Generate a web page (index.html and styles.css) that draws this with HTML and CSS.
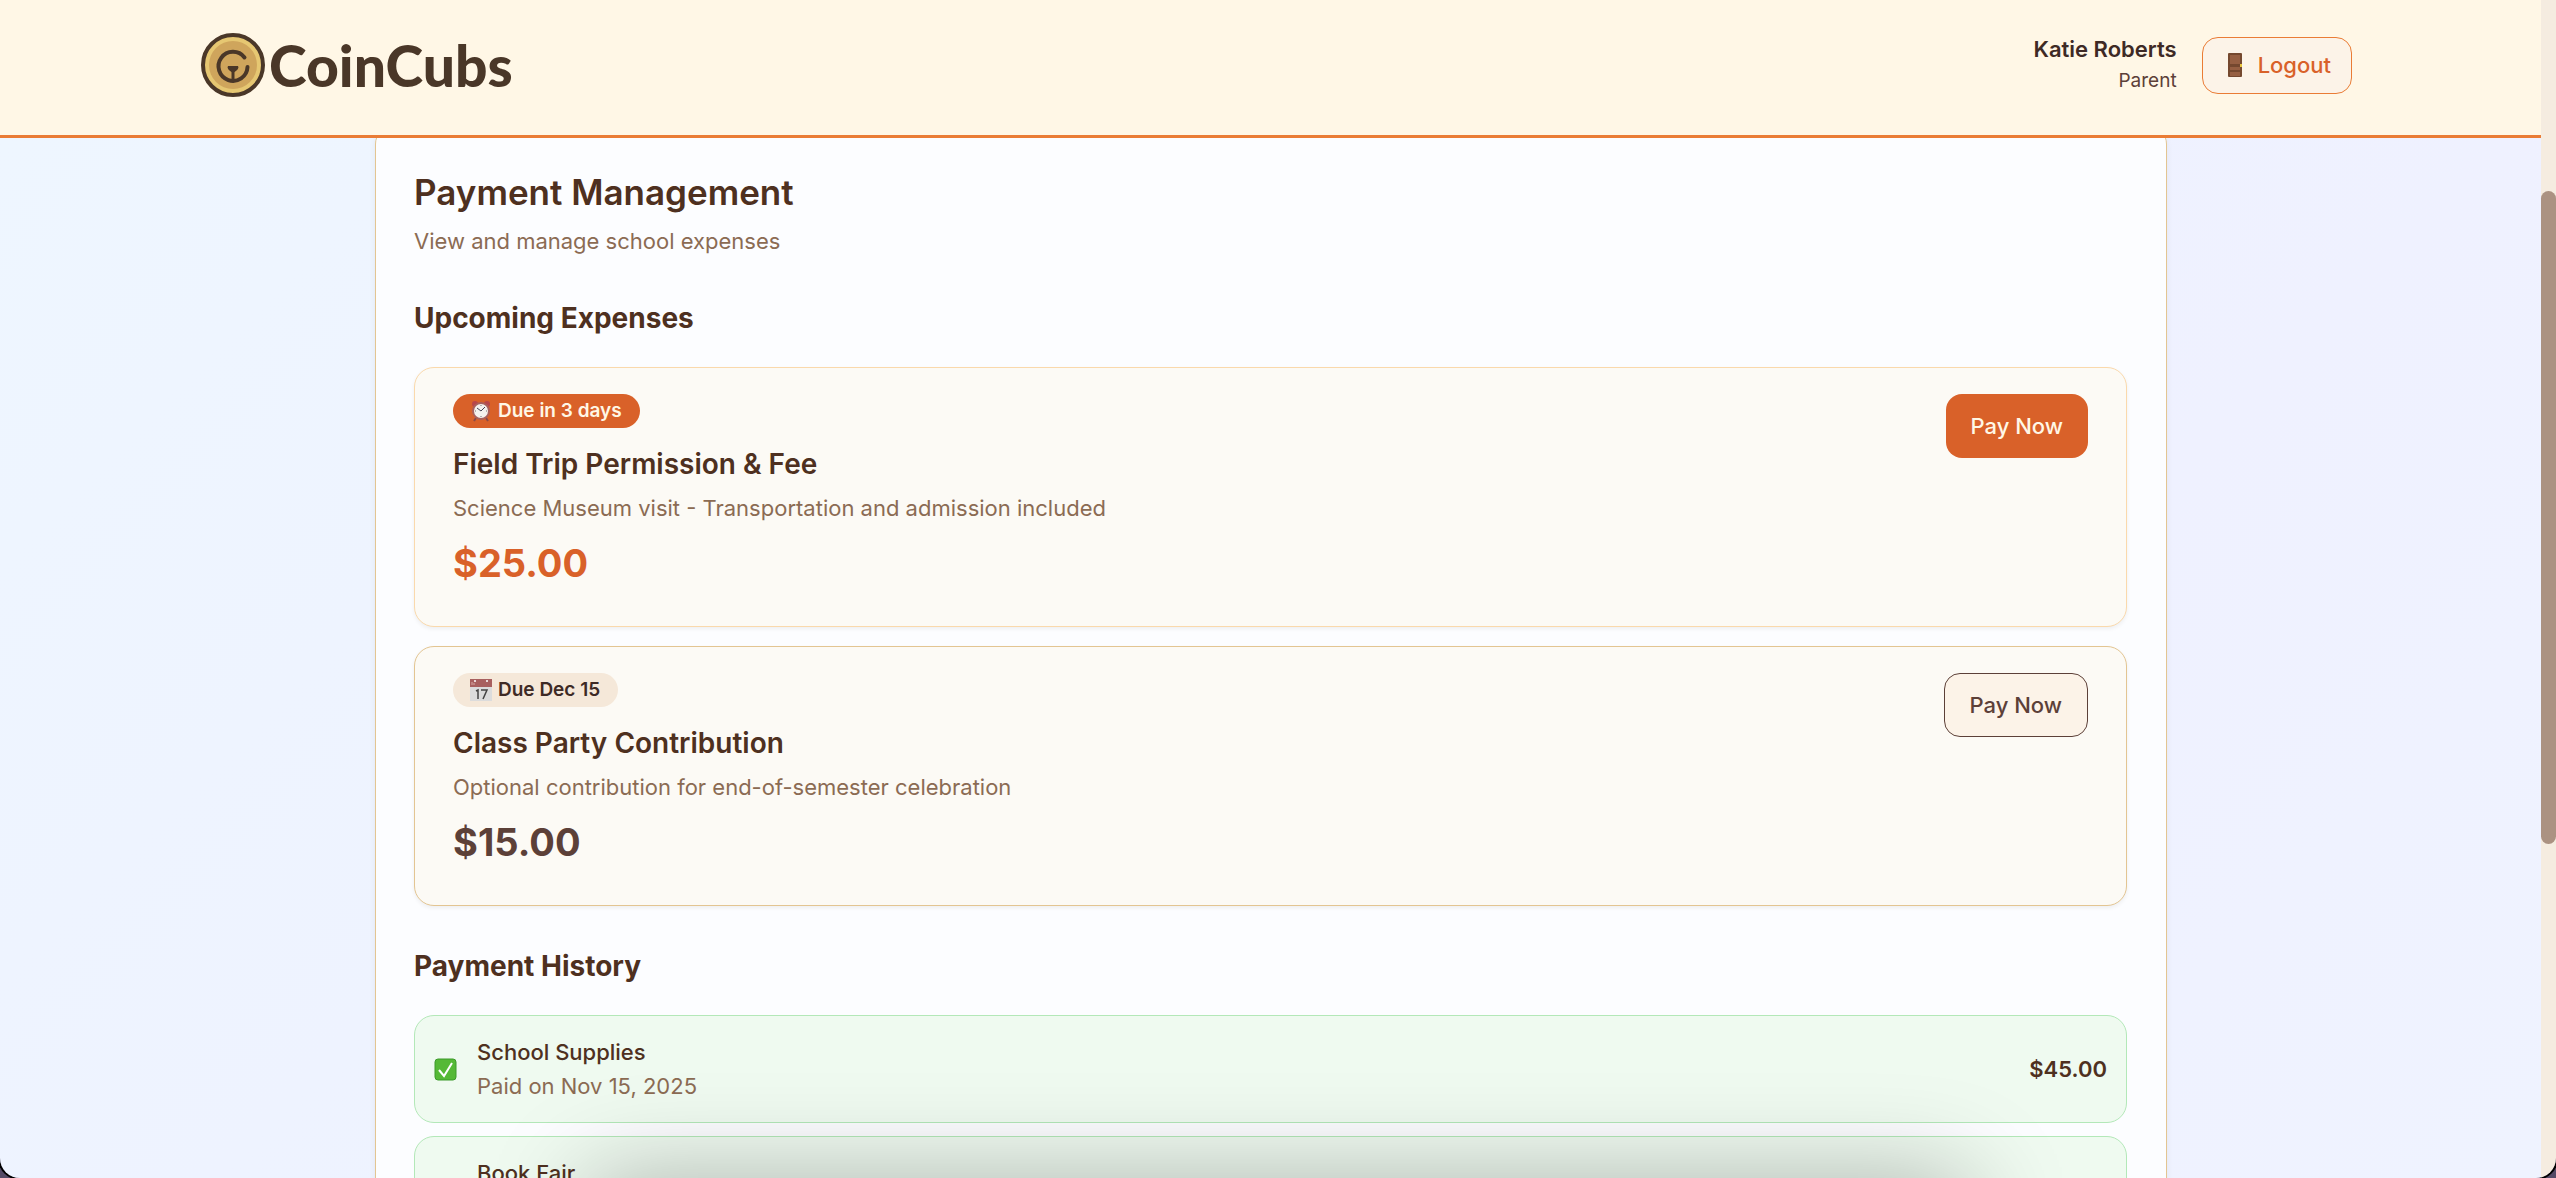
FILE: index.html
```html
<!DOCTYPE html>
<html lang="en">
<head>
<meta charset="UTF-8">
<meta name="viewport" content="width=device-width, initial-scale=1.0">
<title>CoinCubs - Payment Management</title>
<link rel="stylesheet" href="styles.css">
</head>
<body>
<div class="window">
<div class="app">
<header class="header">
<a href="#" class="logo">
<svg class="logo-coin" viewBox="0 0 64 64" aria-hidden="true">
<circle cx="32" cy="32" r="30" fill="#e6c772" stroke="#4a3728" stroke-width="4"/>
<circle cx="32" cy="32" r="24" fill="#cfa55c"/>
<path d="M43.500 24.500A14.500 14.500 0 1 0 46.500 34" fill="none" stroke="#4a3728" stroke-width="4" stroke-linecap="round"/>
<path d="M27 33h10q2 3-5 7q-7-4-5-7z" fill="#4a3728"/>
<path d="M32 37v9" stroke="#4a3728" stroke-width="3"/>
</svg>
<span class="logo-text">CoinCubs</span>
</a>
<div class="user">
<div class="user-info">
<div class="user-name">Katie Roberts</div>
<div class="user-role">Parent</div>
</div>
<button type="button" class="logout">
<svg class="door" viewBox="0 0 14 24" aria-hidden="true">
<rect width="14" height="24" rx="1" fill="#75482f"/>
<rect x="2" y="2" width="10" height="9" fill="#965f42"/>
<rect x="2" y="14" width="10" height="3" fill="#965f42"/>
<rect x="2" y="19" width="10" height="4" fill="#965f42"/>
<rect x="12" y="11" width="2" height="3" fill="#e8c53c"/>
</svg>
Logout
</button>
</div>
</header>
<main class="main">
<div class="panel">
<h1>Payment Management</h1>
<p class="subtitle">View and manage school expenses</p>

<h2>Upcoming Expenses</h2>
<div class="expense expense-urgent">
<div>
<span class="badge">
<svg class="badge-icon" viewBox="0 0 20 22" aria-hidden="true">
<circle cx="4" cy="4" r="3" fill="#b8474a"/>
<circle cx="16" cy="4" r="3" fill="#b8474a"/>
<path d="M5 18l-2 3M15 18l2 3" stroke="#8a4a48" stroke-width="2"/>
<circle cx="10" cy="11" r="8" fill="#f4f2ee" stroke="#a8605c" stroke-width="2"/>
<path d="M6 8l4 3l4-4" fill="none" stroke="#445" stroke-width="1"/>
<path d="M10 5v1M10 16v1M4 11h1M15 11h1" stroke="#777" stroke-width="1"/>
</svg>
Due in 3 days
</span>
<h3>Field Trip Permission &amp; Fee</h3>
<p class="details">Science Museum visit - Transportation and admission included</p>
<p class="price">$25.00</p>
</div>
<button type="button" class="pay">Pay Now</button>
</div>
<div class="expense">
<div>
<span class="badge">
<svg class="badge-icon" viewBox="0 0 22 22" aria-hidden="true">
<rect width="22" height="22" fill="#dcdcdc"/>
<rect width="22" height="8" fill="#a8605f"/>
<circle cx="5" cy="2" r="1" fill="#fff"/>
<circle cx="17" cy="2" r="1" fill="#fff"/>
<path d="M2 3v3M4 4v2" stroke="#d8a8a6"/>
<path d="M6 12l2-1v9M11 11h6l-4 9" fill="none" stroke="#444" stroke-width="1.500"/>
</svg>
Due Dec 15
</span>
<h3>Class Party Contribution</h3>
<p class="details">Optional contribution for end-of-semester celebration</p>
<p class="price">$15.00</p>
</div>
<button type="button" class="pay">Pay Now</button>
</div>

<h2>Payment History</h2>
<ul class="history">
<li>
<svg class="check" viewBox="0 0 23 23" aria-hidden="true">
<rect x="1" y="1" width="21" height="21" rx="3" fill="#55b936" stroke="#3c9a2a" stroke-width="1"/>
<path d="M5 12l5 6l8-13" fill="none" stroke="#fff" stroke-width="2"/>
</svg>
<div class="history-info">
<div class="history-name">School Supplies</div>
<div class="history-date">Paid on Nov 15, 2025</div>
</div>
<div class="history-price">$45.00</div>
</li>
<li>
<svg class="check" viewBox="0 0 23 23" aria-hidden="true">
<rect x="1" y="1" width="21" height="21" rx="3" fill="#55b936" stroke="#3c9a2a" stroke-width="1"/>
<path d="M5 12l5 6l8-13" fill="none" stroke="#fff" stroke-width="2"/>
</svg>
<div class="history-info">
<div class="history-name">Book Fair</div>
</div>
</li>
</ul>
</div>
</main>
</div>
<div class="scrollbar"><div class="thumb"></div></div>
<div class="dock-shadow"></div>
</div>
</body>
</html>
```
FILE: styles.css
```css
* {
    box-sizing: border-box;
}

body {
    margin: 0;
    background: #544a66;
    color: #4e3020;
    font: 22px/34px Inter, "Liberation Sans", sans-serif;
}

h1, h2, h3, p, ul {
    margin: 0;
    padding: 0;
}

.window {
    position: relative;
    display: flex;
    height: 100vh;
    overflow: hidden;
    border-radius: 0 0 20px 20px;
    box-shadow: 0 0 0 2px #000;
}

.app {
    display: flex;
    flex: 1;
    flex-direction: column;
    min-width: 0;
}

.header {
    z-index: 1;
    display: flex;
    flex: none;
    align-items: flex-start;
    justify-content: space-between;
    height: 138px;
    padding: 33px 189px 0 201px;
    background: #fff7e6;
    border-bottom: 3px solid #ea7c35;
}

.logo {
    display: flex;
    align-items: center;
    gap: 4px;
    color: #4a3728;
    text-decoration: none;
}

.logo-coin {
    width: 64px;
    height: 64px;
}

.logo-text {
    font: 900 57px/64px Lato, Inter, sans-serif;
}

.user {
    display: flex;
    align-items: center;
    gap: 25px;
    padding-top: 1px;
}

.user-info {
    text-align: right;
    line-height: 31px;
}

.user-name {
    color: #3e2a25;
    font-weight: 600;
}

.user-role {
    color: #5c4038;
    font-size: 19px;
}

button {
    cursor: pointer;
    border-radius: 16px;
    font: 500 22px/34px Inter, "Liberation Sans", sans-serif;
}

.logout {
    display: flex;
    align-items: center;
    gap: 16px;
    height: 57px;
    padding: 0 20px 0 25px;
    border: 1px solid #ea7c35;
    background: #fcf3e8;
    color: #d96129;
}

.door {
    width: 14px;
    height: 24px;
}

.main {
    flex: 1;
    min-height: 0;
    padding: 0 374px 0 375px;
    overflow: hidden;
    background: linear-gradient(135deg, #eef6ff, #eef3ff 35%, #eff1ff 70%, #eff3ff);
}

.panel {
    margin-top: -12px;
    padding: 38px 39px 38px 38px;
    border: 1px solid #e3c592;
    border-radius: 18px;
    background: #fcfdff;
    box-shadow: 0 2px 6px rgba(0, 0, 0, 0.06);
}

h1 {
    font-size: 35px;
    line-height: 54px;
    font-weight: 600;
}

h2 {
    margin: 40px 0 29px;
    font-size: 28px;
    line-height: 40px;
    font-weight: 700;
}

h3 {
    margin-top: 16px;
    font-size: 28px;
    line-height: 40px;
    font-weight: 600;
}

.subtitle,
.details,
.history-date {
    color: #8b6b53;
}

.subtitle {
    margin-top: 5px;
}

.details {
    margin-top: 7px;
}

.expense {
    display: flex;
    align-items: flex-start;
    justify-content: space-between;
    height: 260px;
    margin-bottom: 19px;
    padding: 26px 38px;
    border: 1px solid #e3c592;
    border-radius: 20px;
    background: #fcfaf5;
    box-shadow: 0 2px 4px rgba(0, 0, 0, 0.06);
}

.expense-urgent {
    border-color: #fad9ac;
}

.badge {
    display: flex;
    align-items: center;
    gap: 6px;
    width: fit-content;
    padding: 0 18px 0 17px;
    border-radius: 17px;
    background: #f5e8d9;
    color: #3e2a25;
    font-size: 19px;
    font-weight: 600;
}

.badge-icon {
    width: 22px;
    height: 22px;
}

.expense-urgent .badge {
    background: #d96129;
    color: #fff7e6;
}

.price {
    margin-top: 11px;
    color: #5c4038;
    font-size: 38px;
    line-height: 54px;
    font-weight: 700;
}

.expense-urgent .price {
    color: #d96129;
}

.pay {
    height: 64px;
    padding: 0 25px;
    border: 1px solid #5c4038;
    background: #fcf3e8;
    color: #5c4038;
}

.expense-urgent .pay {
    border: none;
    background: #d96129;
    color: #fff7e6;
}

.history {
    list-style: none;
}

.history li {
    display: flex;
    align-items: center;
    height: 108px;
    margin-bottom: 13px;
    padding: 0 19px;
    border: 1px solid #b3e8b8;
    border-radius: 20px;
    background: #effaf0;
}

.check {
    width: 23px;
    height: 23px;
    margin-right: 20px;
}

.history-info {
    flex: 1;
    min-height: 68px;
}

.history-name {
    font-weight: 500;
}

.history-price {
    font-weight: 600;
}

.scrollbar {
    width: 15px;
    height: 100%;
    padding-top: 191px;
    background: #f5ece0;
}

.thumb {
    height: 653px;
    border-radius: 8px;
    background: #ab9282;
}

/* soft shadow rising from below the window edge */
.dock-shadow {
    position: absolute;
    top: 100%;
    left: 23%;
    right: 23%;
    height: 200px;
    box-shadow: 0 0 100px rgba(0, 0, 0, 0.28);
}
```
